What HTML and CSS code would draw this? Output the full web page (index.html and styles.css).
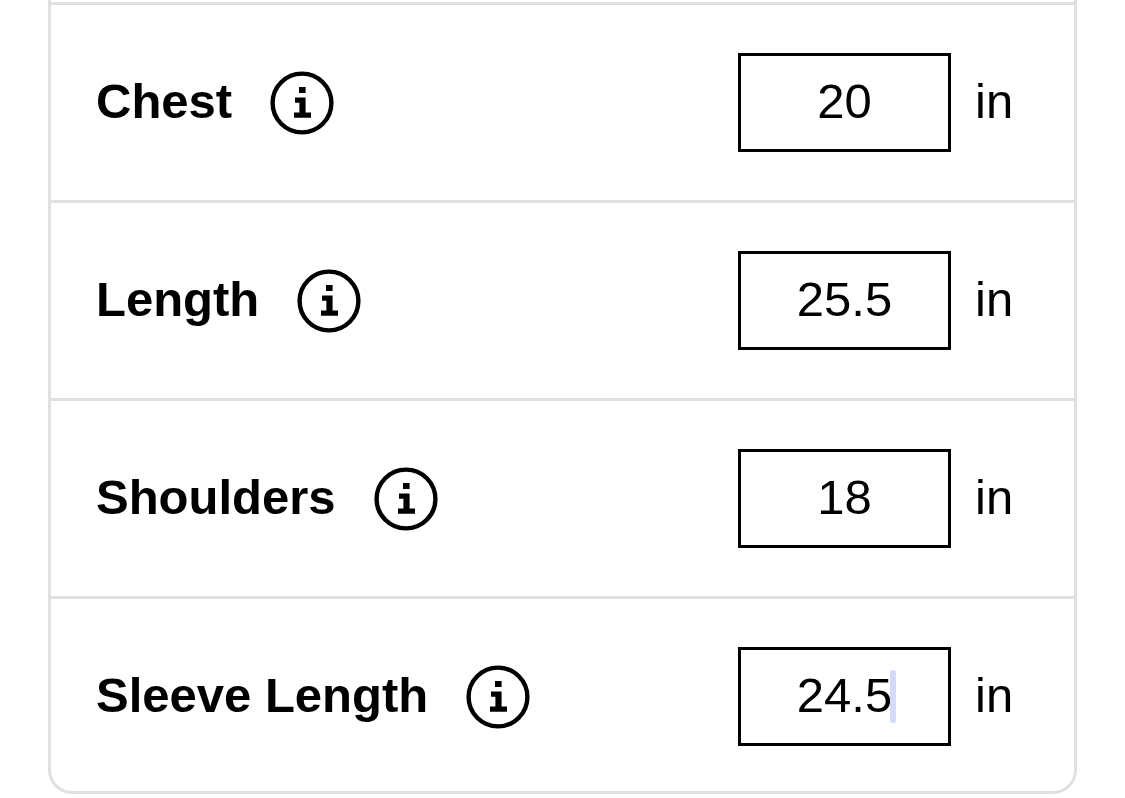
FILE: index.html
```html
<!DOCTYPE html>
<html lang="en">
<head>
    <meta charset="UTF-8">
    <meta name="viewport" content="width=device-width, initial-scale=1.0">
    <title>Measurements</title>
    <link rel="stylesheet" href="styles.css">
</head>
<body>

    <!-- Shared info icon -->
    <svg class="sprite" aria-hidden="true">
        <symbol id="info" viewBox="0 0 64 64">
            <circle cx="32" cy="32" r="29.4" fill="none" stroke="#000" stroke-width="4.4"/>
            <path d="M29 16h6.6v6H29zM25 26.4h10.6v15H41v5.4H24v-5.4h5.4v-9.6H25z"/>
        </symbol>
    </svg>

    <form class="measurements">
        <div class="row">
            <label class="name" for="chest">Chest</label>
            <button type="button" class="info" aria-label="About chest"><svg><use href="#info"/></svg></button>
            <div class="field">
                <input type="text" inputmode="decimal" id="chest" value="20">
            </div>
            <span class="unit">in</span>
        </div>

        <div class="row">
            <label class="name" for="length">Length</label>
            <button type="button" class="info" aria-label="About length"><svg><use href="#info"/></svg></button>
            <div class="field">
                <input type="text" inputmode="decimal" id="length" value="25.5">
            </div>
            <span class="unit">in</span>
        </div>

        <div class="row">
            <label class="name" for="shoulders">Shoulders</label>
            <button type="button" class="info" aria-label="About shoulders"><svg><use href="#info"/></svg></button>
            <div class="field">
                <input type="text" inputmode="decimal" id="shoulders" value="18">
            </div>
            <span class="unit">in</span>
        </div>

        <div class="row">
            <label class="name" for="sleeve">Sleeve Length</label>
            <button type="button" class="info" aria-label="About sleeve length"><svg><use href="#info"/></svg></button>
            <div class="field">
                <input type="text" inputmode="decimal" id="sleeve" value="24.5">
                <span class="caret"></span>
            </div>
            <span class="unit">in</span>
        </div>
    </form>

</body>
</html>
```

FILE: styles.css
```css
* {
    box-sizing: border-box;
}

body {
    margin: 0;
    font-family: "Liberation Sans", Arial, sans-serif;
    font-size: 49px;
    line-height: 56px;
    background-color: #fff;
    color: #000;
}

.sprite {
    position: absolute;
    width: 0;
    height: 0;
}

.measurements {
    margin: 0 48px;
    padding-top: 2px;
    border: 3px solid #e0e0e0;
    border-top: none;
    border-radius: 0 0 24px 24px;
}

.row {
    display: flex;
    align-items: center;
    padding: 48px 45px;
    border-top: 3px solid #e0e0e0;
}

.row:last-child {
    padding-bottom: 45px;
}

.name {
    font-weight: bold;
    padding-bottom: 4px;
}

.info {
    width: 64px;
    height: 64px;
    margin-left: 38px;
    padding: 0;
    border: none;
    background: none;
    cursor: pointer;
}

.info svg {
    display: block;
    width: 64px;
    height: 64px;
}

.field {
    position: relative;
    width: 213px;
    margin-left: auto;
}

.field input {
    display: block;
    width: 100%;
    height: 99px;
    padding: 0 0 4px;
    border: 3px solid #000;
    border-radius: 0;
    background-color: #fff;
    color: #000;
    font-family: inherit;
    font-size: 49px;
    text-align: center;
    outline: none;
}

/* Text cursor */
.caret {
    position: absolute;
    top: 23px;
    right: 55px;
    width: 6px;
    height: 53px;
    border-radius: 3px;
    background-color: #d3dafa;
}

.unit {
    width: 54px;
    margin-left: 24px;
    padding-bottom: 4px;
}
```
